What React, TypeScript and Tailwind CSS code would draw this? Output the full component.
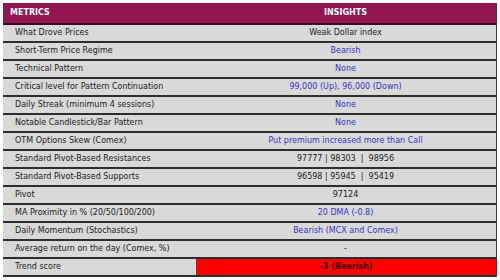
const rows: { label: string; value: string; tone: "dark" | "blue" | "alert" }[] = [
  { label: "What Drove Prices", value: "Weak Dollar index", tone: "dark" },
  { label: "Short-Term Price Regime", value: "Bearish", tone: "blue" },
  { label: "Technical Pattern", value: "None", tone: "blue" },
  { label: "Critical level for Pattern Continuation", value: "99,000 (Up), 96,000 (Down)", tone: "blue" },
  { label: "Daily Streak (minimum 4 sessions)", value: "None", tone: "blue" },
  { label: "Notable Candlestick/Bar Pattern", value: "None", tone: "blue" },
  { label: "OTM Options Skew (Comex)", value: "Put premium increased more than Call", tone: "blue" },
  { label: "Standard Pivot-Based Resistances", value: "97777 | 98303\u00a0 |\u00a0 98956", tone: "dark" },
  { label: "Standard Pivot-Based Supports", value: "96598 | 95945\u00a0 |\u00a0 95419", tone: "dark" },
  { label: "Pivot", value: "97124", tone: "dark" },
  { label: "MA Proximity in % (20/50/100/200)", value: "20 DMA (-0.8)", tone: "blue" },
  { label: "Daily Momentum (Stochastics)", value: "Bearish (MCX and Comex)", tone: "blue" },
  { label: "Average return on the day (Comex, %)", value: "-", tone: "dark" },
  { label: "Trend score", value: "-3 (Bearish)", tone: "alert" },
];

export default function App() {
  return (
    <div className="w-[500px] h-[280px] bg-white pt-[3px] pl-[3px] font-['DejaVu_Sans',sans-serif] text-[8px] overflow-hidden">
      <div className="w-[494px] border-r border-[#3a3a3a]">
        {/* header */}
        <div className="flex h-[22px] bg-[#931650] border-b-2 border-[#3b0a22] text-white font-bold">
          <div className="w-[192px] flex items-center pl-[7px]">METRICS</div>
          <div className="flex-1 flex items-center justify-center">INSIGHTS</div>
        </div>

        {rows.map((r) => (
          <div key={r.label} className="flex h-[18px] bg-[#d9d9d9] border-b-2 border-[#2e2e2e]">
            <div className="w-[192px] flex items-center pl-[12px] text-[#222]">{r.label}</div>
            {r.tone === "alert" ? (
              <div className="flex-1 flex items-center justify-center bg-[#ff0000] border-l border-[#eee] font-bold text-[#3a0000]">
                {r.value}
              </div>
            ) : (
              <div
                className={
                  r.tone === "blue"
                    ? "flex-1 flex items-center justify-center text-[#3535c8]"
                    : "flex-1 flex items-center justify-center text-[#222]"
                }
              >
                {r.value}
              </div>
            )}
          </div>
        ))}
      </div>
    </div>
  );
}
